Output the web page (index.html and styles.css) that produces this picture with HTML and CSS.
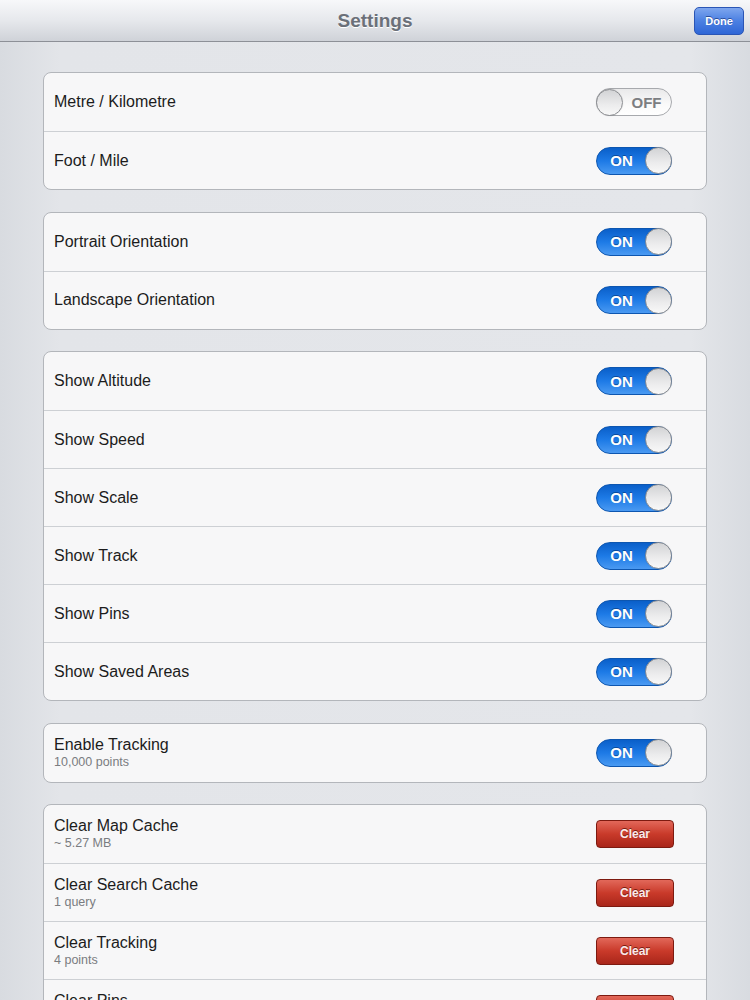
FILE: index.html
```html
<!DOCTYPE html>
<html>
<head>
<meta charset="utf-8">
<title>Settings</title>
<link rel="stylesheet" href="styles.css">
</head>
<body>
<header class="navbar">
  <h1 class="title">Settings</h1>
  <button class="done">Done</button>
</header>
<main class="content">
  <section class="group">
    <div class="row"><div class="label">Metre / Kilometre</div><div class="toggle off"><span class="knob"></span><span class="txt">OFF</span></div></div>
    <div class="row"><div class="label">Foot / Mile</div><div class="toggle on"><span class="txt">ON</span><span class="knob"></span></div></div>
  </section>
  <section class="group">
    <div class="row"><div class="label">Portrait Orientation</div><div class="toggle on"><span class="txt">ON</span><span class="knob"></span></div></div>
    <div class="row"><div class="label">Landscape Orientation</div><div class="toggle on"><span class="txt">ON</span><span class="knob"></span></div></div>
  </section>
  <section class="group">
    <div class="row"><div class="label">Show Altitude</div><div class="toggle on"><span class="txt">ON</span><span class="knob"></span></div></div>
    <div class="row"><div class="label">Show Speed</div><div class="toggle on"><span class="txt">ON</span><span class="knob"></span></div></div>
    <div class="row"><div class="label">Show Scale</div><div class="toggle on"><span class="txt">ON</span><span class="knob"></span></div></div>
    <div class="row"><div class="label">Show Track</div><div class="toggle on"><span class="txt">ON</span><span class="knob"></span></div></div>
    <div class="row"><div class="label">Show Pins</div><div class="toggle on"><span class="txt">ON</span><span class="knob"></span></div></div>
    <div class="row"><div class="label">Show Saved Areas</div><div class="toggle on"><span class="txt">ON</span><span class="knob"></span></div></div>
  </section>
  <section class="group">
    <div class="row"><div class="label">Enable Tracking<div class="sub">10,000 points</div></div><div class="toggle on"><span class="txt">ON</span><span class="knob"></span></div></div>
  </section>
  <section class="group">
    <div class="row"><div class="label">Clear Map Cache<div class="sub">~ 5.27 MB</div></div><button class="clear">Clear</button></div>
    <div class="row"><div class="label">Clear Search Cache<div class="sub">1 query</div></div><button class="clear">Clear</button></div>
    <div class="row"><div class="label">Clear Tracking<div class="sub">4 points</div></div><button class="clear">Clear</button></div>
    <div class="row"><div class="label">Clear Pins<div class="sub">0 pins</div></div><button class="clear">Clear</button></div>
  </section>
</main>
</body>
</html>
```

FILE: styles.css
```css
html, body {
  margin: 0;
  padding: 0;
  height: 1000px;
  overflow: hidden;
}
body {
  font-family: "Liberation Sans", Arial, sans-serif;
  background: linear-gradient(to right, #d8dbe0 0%, #e3e5e9 8%, #e4e6ea 92%, #d8dbe0 100%);
  color: #1a1a1a;
}
.navbar {
  height: 42px;
  box-sizing: border-box;
  border-bottom: 1px solid #8d9097;
  background: linear-gradient(to bottom, #f7f8fa 0%, #e6e8ec 50%, #cfd2d8 100%);
  display: flex;
  align-items: center;
  justify-content: center;
  position: relative;
}
.title {
  margin: 0;
  font-size: 19px;
  font-weight: bold;
  color: #6b7079;
  text-shadow: 0 1px 0 #ffffff;
}
.done {
  position: absolute;
  right: 6px;
  top: 7px;
  width: 50px;
  height: 28px;
  border: 1px solid #2a55b5;
  border-radius: 5px;
  background: linear-gradient(to bottom, #7ea6ee 0%, #4b80e2 50%, #2f66d6 100%);
  color: #fff;
  font-family: "Liberation Sans", Arial, sans-serif;
  font-size: 11px;
  font-weight: bold;
  text-shadow: 0 -1px 0 #2a4d9a;
  padding: 0;
}
.content {
  padding: 30px 43px 0 43px;
  display: flex;
  flex-direction: column;
  gap: 21.5px;
}
.group {
  background: #f7f7f8;
  border: 1px solid #b3b6bb;
  border-radius: 8px;
  overflow: hidden;
}
.row {
  height: 57px;
  display: flex;
  align-items: center;
  justify-content: space-between;
  padding: 0 34px 0 10px;
  border-top: 1px solid #cdd0d4;
}
.row:first-child {
  border-top: none;
  height: 58px;
}
.label {
  font-size: 16px;
  color: #1c1c1c;
  line-height: 18px;
}
.sub {
  font-size: 12.5px;
  color: #7a7c80;
  line-height: 16px;
}
.toggle {
  width: 76px;
  height: 28px;
  box-sizing: border-box;
  border-radius: 14px;
  display: flex;
  align-items: center;
  font-size: 15px;
  font-weight: bold;
}
.toggle.on {
  background: linear-gradient(to bottom, #0a5fc9 0%, #1d7ae6 50%, #4a9af2 100%);
  border: 1px solid #0d56b0;
  color: #fff;
  justify-content: space-between;
}
.toggle.off {
  background: linear-gradient(to bottom, #e9e9ea 0%, #fafafa 60%, #ffffff 100%);
  border: 1px solid #a7a9ad;
  color: #7c7e82;
  justify-content: space-between;
}
.toggle .txt {
  flex: 1;
  text-align: center;
}
.toggle.on .txt {
  text-shadow: 0 -1px 0 #0a4a9c;
}
.knob {
  width: 27px;
  height: 27px;
  box-sizing: border-box;
  border-radius: 50%;
  background: linear-gradient(to bottom, #d2d3d5 0%, #ececed 60%, #f8f8f8 100%);
  border: 1px solid #8c8e92;
  margin: -1px;
  box-shadow: 0 0 1px rgba(0,0,0,0.2);
}
.clear {
  width: 78px;
  height: 28px;
  border: 1px solid #7d1a10;
  border-radius: 4px;
  background: linear-gradient(to bottom, #e2685a 0%, #c93a2a 50%, #a9261a 100%);
  color: #fbeaea;
  font-family: "Liberation Sans", Arial, sans-serif;
  font-size: 12px;
  font-weight: bold;
  text-shadow: 0 -1px 0 #7a1a10;
  padding: 0;
  margin-right: -2px;
}
```
